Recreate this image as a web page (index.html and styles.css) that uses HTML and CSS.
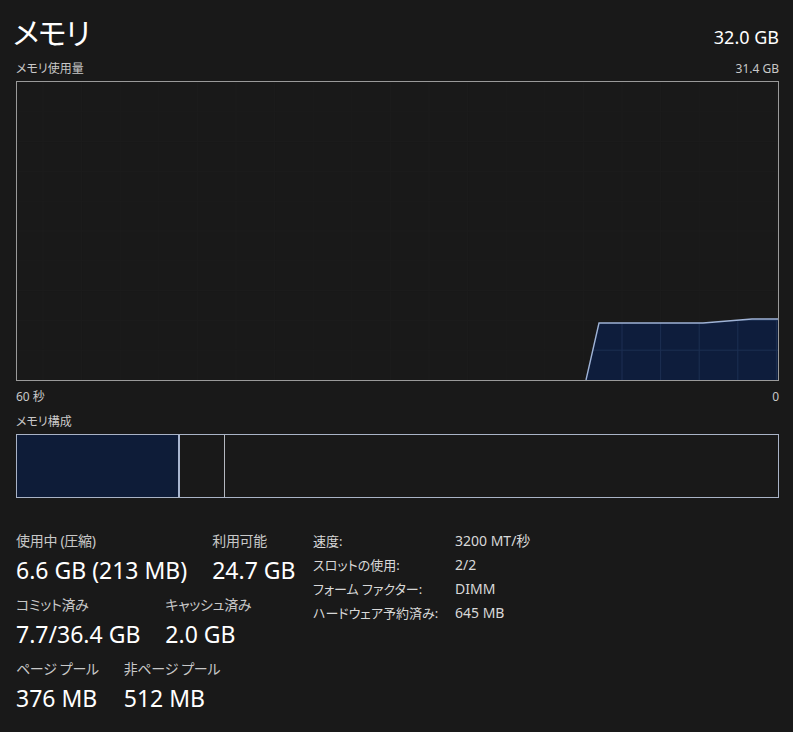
FILE: index.html
```html
<!DOCTYPE html>
<html lang="ja">
<head>
<meta charset="utf-8">
<link rel="stylesheet" href="styles.css">
</head>
<body>
<div class="page">
  <header class="head">
    <h1 class="title">メモリ</h1>
    <div class="total">32.0 GB</div>
  </header>
  <div class="caprow">
    <span>メモリ使用量</span>
    <span>31.4 GB</span>
  </div>
  <div class="graph">
    <svg class="graph-svg" viewBox="0 0 761 298" preserveAspectRatio="none">
      <defs>
        <clipPath id="fillclip">
          <polygon points="569,298 582,241 686,241 735,237 761,237 761,298"/>
        </clipPath>
        <g id="grid">
          <path d="M26 0V298M64.6 0V298M103.2 0V298M141.8 0V298M180.4 0V298M219 0V298M257.6 0V298M296.2 0V298M334.8 0V298M373.4 0V298M412 0V298M450.6 0V298M489.2 0V298M527.8 0V298M566.4 0V298M605 0V298M643.6 0V298M682.2 0V298M720.8 0V298M759.4 0V298"/>
          <path d="M0 29.8H761M0 59.6H761M0 89.4H761M0 119.2H761M0 149H761M0 178.8H761M0 208.6H761M0 238.4H761M0 268.2H761"/>
        </g>
      </defs>
      <use href="#grid" stroke="#1c1c1c" stroke-width="1" fill="none"/>
      <polygon points="569,298 582,241 686,241 735,237 761,237 761,298" fill="#0e1d3c"/>
      <g clip-path="url(#fillclip)">
        <use href="#grid" stroke="#1c2f52" stroke-width="1" fill="none"/>
      </g>
      <polyline points="569,298 582,241 686,241 735,237 761,237" fill="none" stroke="#9fb3d6" stroke-width="1.4"/>
    </svg>
  </div>
  <div class="caprow axis">
    <span>60 秒</span>
    <span>0</span>
  </div>
  <div class="caprow comp-label">
    <span>メモリ構成</span>
  </div>
  <div class="compbar">
    <div class="seg seg-used"></div>
    <div class="seg seg-mod"></div>
    <div class="seg seg-free"></div>
  </div>

  <section class="stats">
    <div class="stat-left">
      <div class="srow">
        <div class="stat"><div class="slabel">使用中 (圧縮)</div><div class="svalue">6.6 GB (213 MB)</div></div>
        <div class="stat"><div class="slabel">利用可能</div><div class="svalue">24.7 GB</div></div>
      </div>
      <div class="srow">
        <div class="stat"><div class="slabel">コミット済み</div><div class="svalue">7.7/36.4 GB</div></div>
        <div class="stat"><div class="slabel">キャッシュ済み</div><div class="svalue">2.0 GB</div></div>
      </div>
      <div class="srow">
        <div class="stat"><div class="slabel">ページ プール</div><div class="svalue">376 MB</div></div>
        <div class="stat"><div class="slabel">非ページ プール</div><div class="svalue">512 MB</div></div>
      </div>
    </div>
    <dl class="props">
      <dt>速度:</dt><dd>3200 MT/秒</dd>
      <dt>スロットの使用:</dt><dd>2/2</dd>
      <dt>フォーム ファクター:</dt><dd>DIMM</dd>
      <dt>ハードウェア予約済み:</dt><dd>645 MB</dd>
    </dl>
  </section>
</div>
</body>
</html>
```
FILE: styles.css
```css
html, body {
  margin: 0;
  padding: 0;
  background: #191919;
}
body {
  font-family: "Noto Sans", "Noto Sans CJK JP", sans-serif;
  font-feature-settings: "palt";
  color: #e6e6e6;
}
.page {
  width: 763px;
  padding: 0 14px 0 16px;
}
.head {
  display: flex;
  justify-content: space-between;
  align-items: baseline;
  height: 61px;
}
.title {
  margin: 13px 0 0 -3px;
  font-size: 30px;
  font-weight: 400;
  letter-spacing: -1px;
  line-height: 40px;
  color: #ffffff;
}
.total {
  font-size: 18px;
  color: #ffffff;
}
.caprow {
  display: flex;
  justify-content: space-between;
  font-size: 12px;
  line-height: 16px;
  height: 20px;
  color: #c8c8c8;
  align-items: flex-start;
}
.graph {
  height: 298px;
  border: 1px solid #9a9a9a;
}
.graph-svg {
  display: block;
  width: 100%;
  height: 100%;
}
.axis {
  margin-top: 8px;
  height: 25px;
}
.comp-label {
  height: 20px;
}
.compbar {
  display: flex;
  height: 62px;
  border: 1px solid #a9b3c6;
}
.seg {
  height: 100%;
}
.seg-used {
  width: 161px;
  background: #0e1c38;
  border-right: 2px solid #a9b6d0;
}
.seg-mod {
  width: 44px;
  border-right: 1px solid #b4b8c0;
}
.seg-free {
  flex: 1;
}
.stats {
  display: flex;
  margin-top: 34px;
}
.stat-left {
  display: flex;
  flex-direction: column;
  gap: 10px;
  width: 297px;
}
.srow {
  display: flex;
  gap: 25px;
}
.slabel {
  font-size: 14px;
  line-height: 18px;
  margin-bottom: 4px;
  letter-spacing: -0.3px;
  color: #c8c8c8;
}
.svalue {
  font-size: 23px;
  line-height: 32px;
  color: #ffffff;
}
.props {
  display: grid;
  grid-template-columns: 142px auto;
  grid-auto-rows: 24px;
  margin: 0;
  font-size: 13px;
  line-height: 18px;
  color: #d8d8d8;
}
.props dt, .props dd {
  margin: 0;
}
.props dd {
  font-size: 14px;
}
```
